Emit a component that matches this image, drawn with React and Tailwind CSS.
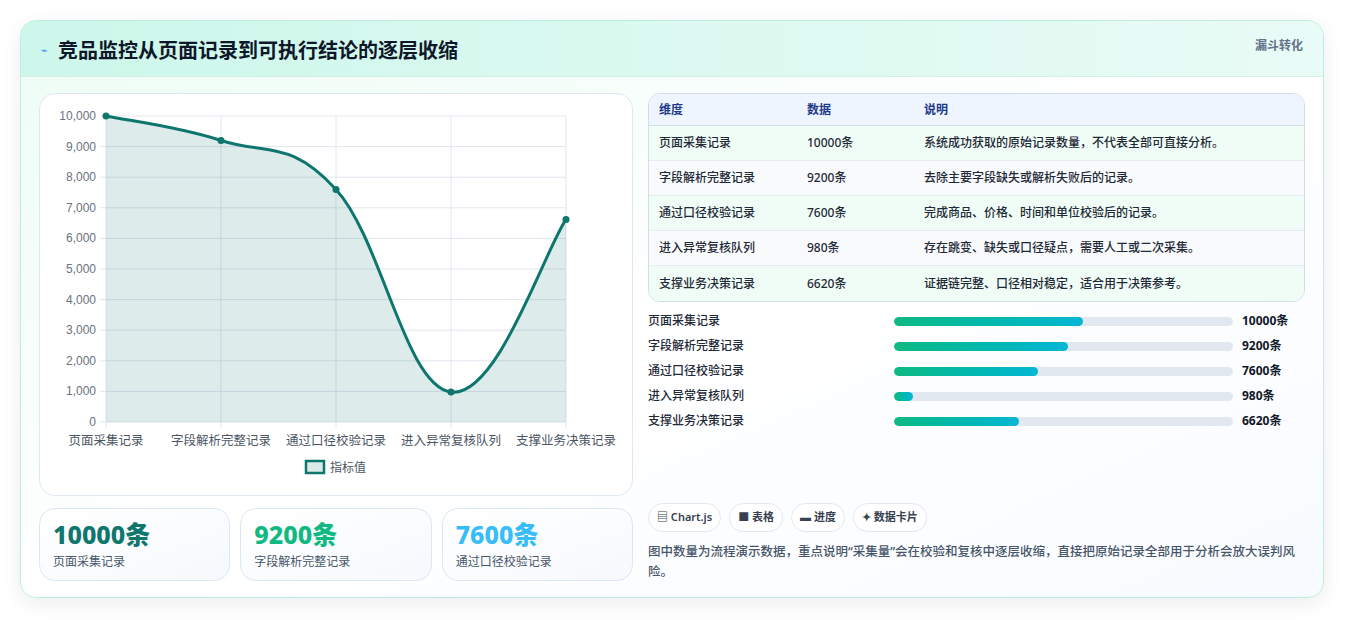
import React from "react";

const F = { fontFamily: '"Noto Sans", "Noto Sans CJK SC", sans-serif' };
const rows = [
  ["页面采集记录", 10000, "系统成功获取的原始记录数量，不代表全部可直接分析。"],
  ["字段解析完整记录", 9200, "去除主要字段缺失或解析失败后的记录。"],
  ["通过口径校验记录", 7600, "完成商品、价格、时间和单位校验后的记录。"],
  ["进入异常复核队列", 980, "存在跳变、缺失或口径疑点，需要人工或二次采集。"],
  ["支撑业务决策记录", 6620, "证据链完整、口径相对稳定，适合用于决策参考。"],
];

function Chart() {
  const W = 594, H = 402;
  const x0 = 66, x1 = 526, yTop = 22, yBot = 328;
  const pts = rows.map((r, i) => [x0 + (i * (x1 - x0)) / 4, yBot - (r[1] / 10000) * (yBot - yTop)]);
  let d = `M${pts[0][0]},${pts[0][1]}`;
  const t = 0.2;
  for (let i = 0; i < pts.length - 1; i++) {
    const p0 = pts[i - 1] || pts[i], p1 = pts[i], p2 = pts[i + 1], p3 = pts[i + 2] || p2;
    const c1 = [p1[0] + (p2[0] - p0[0]) * t, p1[1] + (p2[1] - p0[1]) * t];
    const c2 = [p2[0] - (p3[0] - p1[0]) * t, p2[1] - (p3[1] - p1[1]) * t];
    d += ` C${c1[0]},${c1[1]} ${c2[0]},${c2[1]} ${p2[0]},${p2[1]}`;
  }
  const area = d + ` L${x1},${yBot} L${x0},${yBot} Z`;
  const ticks = [0,1,2,3,4,5,6,7,8,9,10];
  return (
    <svg width={W} height={H} style={{ fontFamily: '"Liberation Sans","Noto Sans CJK SC",sans-serif' }}>
      {ticks.map((k) => {
        const y = yBot - (k / 10) * (yBot - yTop);
        return (
          <g key={k}>
            <line x1={x0 - 6} x2={x1} y1={y} y2={y} stroke="#e1e6ee" />
            <text x={x0 - 10} y={y + 4} textAnchor="end" fontSize="12" fill="#6b7280">{(k * 1000).toLocaleString("en-US")}</text>
          </g>
        );
      })}
      {pts.map((p, i) => (
        <g key={i}>
          <line x1={p[0]} x2={p[0]} y1={yTop} y2={yBot + 6} stroke="#e1e6ee" />
          <text x={p[0]} y={yBot + 23} textAnchor="middle" fontSize="12.5" fill="#4b5563">{rows[i][0]}</text>
        </g>
      ))}
      <path d={area} fill="#0f766e" fillOpacity="0.14" />
      <path d={d} fill="none" stroke="#0f766e" strokeWidth="3" />
      {pts.map((p, i) => <circle key={i} cx={p[0]} cy={p[1]} r="3.5" fill="#0f766e" />)}
      <rect x={266} y={367} width={18} height={12} fill="#dbe9e7" stroke="#0f766e" strokeWidth="2.5" />
      <text x={290} y={378} fontSize="12" fill="#4b5563">指标值</text>
    </svg>
  );
}

export default function App() {
  return (
    <div className="bg-white w-[1345px] h-[620px] pt-5 pl-5" style={F}>
      <div className="w-[1304px] h-[578px] rounded-2xl border border-[#bfece3] overflow-hidden shadow-[0_6px_20px_rgba(15,23,42,0.08)] bg-gradient-to-br from-[#ecfdf5] via-white to-[#f8fbff]">
        <div className="h-[56px] flex items-center justify-between px-5 bg-gradient-to-r from-[#ccf7ea] to-[#e9fbf6] border-b border-[#d5efe8]">
          <div className="flex items-center gap-2.5 pt-1">
            <span className="text-[#3b82f6] text-[11px]">⌁</span>
            <span className="text-[20px] font-bold text-[#0f172a]">竞品监控从页面记录到可执行结论的逐层收缩</span>
          </div>
          <span className="self-start mt-4 text-[12px] font-semibold text-[#64748b]">漏斗转化</span>
        </div>
        <div className="flex gap-[15px] pl-[18px] pr-[18px] pt-4">
          <div className="w-[594px] flex flex-col gap-3">
            <div className="h-[403px] rounded-2xl border border-[#dfe7ef] bg-white overflow-hidden"><Chart /></div>
            <div className="grid grid-cols-3 gap-[10px]">
              {[["10000条","页面采集记录","text-[#0f766e]"],["9200条","字段解析完整记录","text-[#10b981]"],["7600条","通过口径校验记录","text-[#38bdf8]"]].map(([v,l,c]) => (
                <div key={l} className="h-[73px] rounded-2xl border border-[#dbe7f3] bg-gradient-to-br from-white to-[#f6f9fd] px-[13px] pt-[9px]">
                  <div className={`text-[25px] font-extrabold leading-[32px] ${c}`}>{v}</div>
                  <div className="text-[12px] text-[#475569] mt-[3px]">{l}</div>
                </div>
              ))}
            </div>
          </div>
          <div className="flex-1 flex flex-col">
            <div className="rounded-xl border border-[#d3dde9] overflow-hidden text-[12px] text-[#1f2937] font-medium">
              <div className="flex h-[32px] items-center bg-[#eef5ff] border-b border-[#d3dde9] text-[#1e3a8a] font-semibold">
                <div className="w-[158px] pl-[10px]">维度</div><div className="w-[117px]">数据</div><div>说明</div>
              </div>
              {rows.map((r, i) => (
                <div key={i} className={`flex h-[35px] items-center ${i % 2 ? "bg-[#f8fafc]" : "bg-[#f0fdf6]"} ${i < 4 ? "border-b border-[#e5ecf3]" : ""}`}>
                  <div className="w-[158px] pl-[10px]">{r[0]}</div><div className="w-[117px]">{r[1]}条</div><div>{r[2]}</div>
                </div>
              ))}
            </div>
            <div className="flex flex-col gap-[9px] mt-[11px]">
              {rows.map((r) => (
                <div key={r[0]} className="flex items-center h-[16px] text-[12px] text-[#1f2937] font-medium">
                  <div className="w-[246px]">{r[0]}</div>
                  <div className="w-[339px] h-[9px] rounded-full bg-[#e2e8f0] overflow-hidden">
                    <div className="h-full rounded-full bg-gradient-to-r from-[#10b981] to-[#06b6d4]" style={{ width: `${(r[1] / 10000) * 55.8}%` }} />
                  </div>
                  <div className="pl-[9px] font-bold text-[#111827]">{r[1]}条</div>
                </div>
              ))}
            </div>
            <div className="mt-[74px] flex gap-2 text-[11px] font-semibold text-[#374151]">
              {["▤ Chart.js","■ 表格","▬ 进度","✦ 数据卡片"].map((t) => (
                <span key={t} className="h-[29px] px-[8px] flex items-center rounded-full border border-[#e2e8f0] bg-white">{t}</span>
              ))}
            </div>
            <p className="mt-[10px] text-[12.5px] leading-[20px] text-[#475569] font-medium">图中数量为流程演示数据，重点说明“采集量”会在校验和复核中逐层收缩，直接把原始记录全部用于分析会放大误判风险。</p>
          </div>
        </div>
      </div>
    </div>
  );
}
